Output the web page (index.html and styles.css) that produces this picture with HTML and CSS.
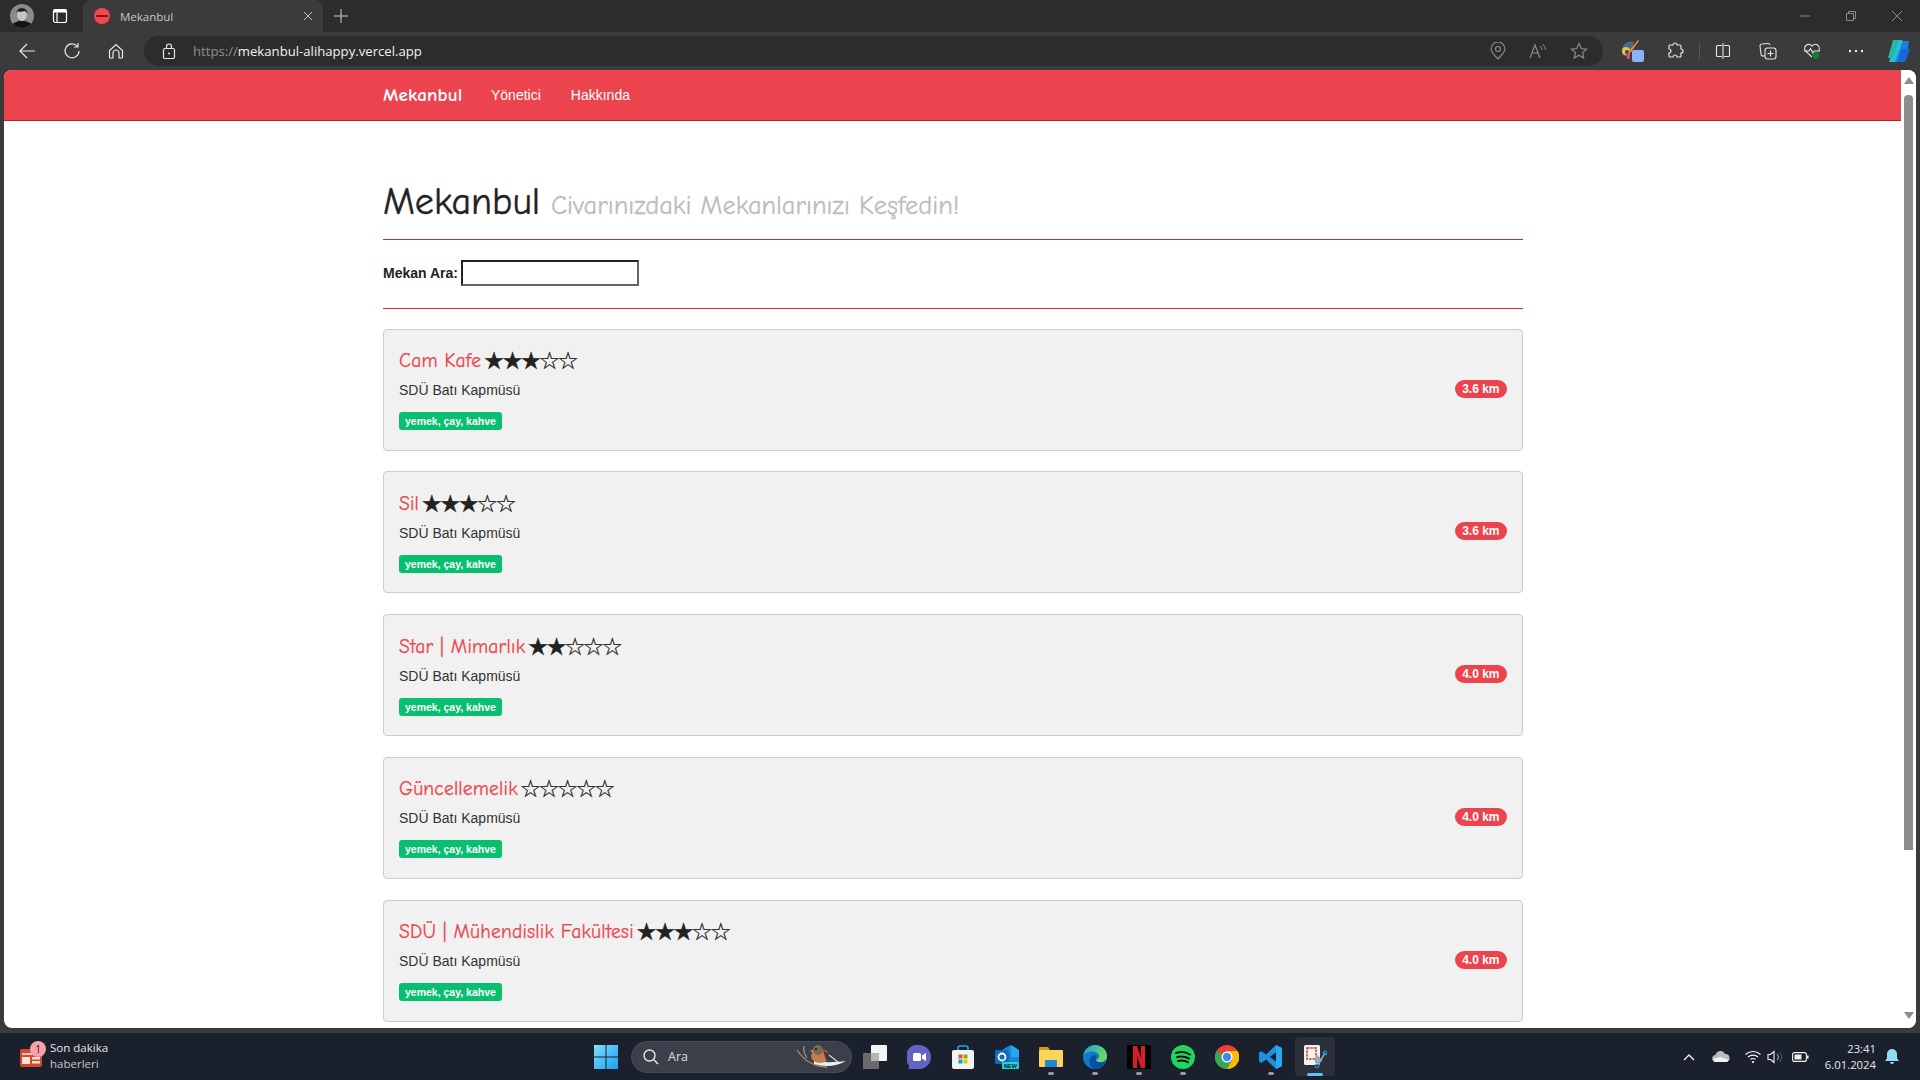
FILE: index.html
```html
<!DOCTYPE html>
<html lang="tr">
<head>
<meta charset="utf-8">
<title>Mekanbul</title>
<link rel="stylesheet" href="styles.css">
</head>
<body>
<div class="tabbar">
  <div class="avatar"><svg viewBox="0 0 24 24" width="24" height="24"><rect width="24" height="24" fill="#8a8a8a"/><ellipse cx="12" cy="11" rx="5" ry="6" fill="#c4c4c4"/><path d="M6.500 10c-1-7 11-8 11 0-1-2-2-3-3-3-3 1-6 1-7 0-1 1-1 2-1 3z" fill="#1c1c1c"/><path d="M8 15c1 3 7 3 8 0l-1 4H9z" fill="#3a3a3a"/><path d="M1 24c1-5 5-7 11-7s10 2 11 7z" fill="#141414"/></svg></div>
  <svg class="tabs-ico" viewBox="0 0 16 16" width="16" height="16"><rect x="1.500" y="1.500" width="13" height="13" rx="2" fill="none" stroke="#fff" stroke-width="1.200"/><path d="M5 4.500v10" stroke="#fff" stroke-width="1.200"/><rect x="1.500" y="1.500" width="13" height="3" fill="#fff"/></svg>
  <div class="tab">
    <span class="favicon"><span class="favicon-mark"></span></span>
    <span class="tab-title">Mekanbul</span>
    <svg class="tab-x" viewBox="0 0 10 10" width="10" height="10"><path d="M1 1l8 8M9 1l-8 8" stroke="#c8c8c8" stroke-width="1"/></svg>
  </div>
  <svg class="plus" viewBox="0 0 14 14" width="14" height="14"><path d="M7 0v14M0 7h14" stroke="#d0d0d0" stroke-width="1"/></svg>
  <div class="win-controls">
    <svg viewBox="0 0 10 10" width="10" height="10"><path d="M0 5h10" stroke="#8a8a8a"/></svg>
    <svg viewBox="0 0 10 10" width="10" height="10"><path d="M.5 2.500h7v7h-7zM2.500 2.500v-2h7v7h-2" fill="none" stroke="#8a8a8a"/></svg>
    <svg viewBox="0 0 10 10" width="10" height="10"><path d="M0 0l10 10M10 0L0 10" stroke="#8a8a8a"/></svg>
  </div>
</div>
<div class="toolbar">
  <svg class="tb-ico back" viewBox="0 0 18 18" width="18" height="18"><path d="M17 9H2M9 2L2 9l7 7" fill="none" stroke="#e6e6e6" stroke-width="1.200"/></svg>
  <svg class="tb-ico" viewBox="0 0 18 18" width="18" height="18"><path d="M14.500 4.500A7 7 0 1 0 16 9M15 1v4h-4" fill="none" stroke="#e6e6e6" stroke-width="1.200"/></svg>
  <svg class="tb-ico home" viewBox="0 0 18 18" width="18" height="18"><path d="M2.500 8.500L9 2.500l6.500 6v6.500a1 1 0 0 1-1 1H12v-5a3 3 0 0 0-6 0v5H3.500a1 1 0 0 1-1-1z" fill="none" stroke="#e6e6e6" stroke-width="1.200"/></svg>
  <div class="address">
    <svg class="lock" viewBox="0 0 14 16" width="14" height="16"><rect x="1.500" y="5.500" width="11" height="10" rx="1.500" fill="none" stroke="#e6e6e6" stroke-width="1.200"/><path d="M4.500 5.500V3.500a2.500 2.500 0 0 1 5 0v2" fill="none" stroke="#e6e6e6" stroke-width="1.200"/><circle cx="7" cy="10.500" r="1" fill="#e6e6e6"/></svg>
    <span class="url"><span class="url-dim">https://</span>mekanbul-alihappy.vercel.app</span>
    <div class="addr-tools">
      <svg viewBox="0 0 16 18" width="16" height="18"><path d="M8 17C4 13 1 10 1 7a7 7 0 0 1 14 0c0 3-3 6-7 10z" fill="none" stroke="#8c8c8c" stroke-width="1.200"/><circle cx="8" cy="7" r="2.500" fill="none" stroke="#8c8c8c" stroke-width="1.200"/></svg>
      <svg viewBox="0 0 18 16" width="18" height="16"><path d="M1 15L6 2l5 13M3 10h6" fill="none" stroke="#8c8c8c" stroke-width="1.200"/><path d="M11 3a5 5 0 0 1 2 4M13.500 1a8 8 0 0 1 3 6" fill="none" stroke="#8c8c8c"/></svg>
      <svg viewBox="0 0 18 18" width="18" height="18"><path d="M9 1.500l2.300 5 5.200.6-3.900 3.500 1.100 5.400L9 13.300 4.300 16l1.100-5.400L1.500 7.100l5.200-.6z" fill="none" stroke="#8c8c8c" stroke-width="1.200"/></svg>
    </div>
  </div>
  <div class="tb-right">
    <svg class="ext" viewBox="0 0 24 24" width="24" height="24"><path d="M1 11a9 9 0 0 1 12-8l-2 9-4 5H3a6 6 0 0 1-2-6z" fill="#3f6f8f"/><circle cx="5" cy="12" r="4" fill="#f2c230"/><circle cx="6" cy="13" r="2" fill="#30465a"/><path d="M8 12l9-11 1 1-8 11z" fill="#f08a2c"/><path d="M5 15h4v5H6z" fill="#e0457a"/><rect x="11" y="11" width="12" height="12" rx="2" fill="#8ab4f8"/></svg>
    <svg class="puzzle" viewBox="0 0 18 18" width="18" height="18"><path d="M7 3a2 2 0 0 1 4 0h3a1 1 0 0 1 1 1v3a2 2 0 0 1 0 4v3a1 1 0 0 1-1 1h-3a2 2 0 0 0-4 0H4a1 1 0 0 1-1-1v-3a2 2 0 0 0 0-4V4a1 1 0 0 1 1-1z" fill="none" stroke="#e6e6e6" stroke-width="1.200"/></svg>
    <span class="sep"></span>
    <svg class="split" viewBox="0 0 16 16" width="16" height="16"><path d="M7 2.500H2.500a1 1 0 0 0-1 1v9a1 1 0 0 0 1 1H7M9 2.500h4.500a1 1 0 0 1 1 1v9a1 1 0 0 1-1 1H9M8 0v16" fill="none" stroke="#e6e6e6" stroke-width="1.100"/></svg>
    <svg class="collect" viewBox="0 0 18 18" width="18" height="18"><path d="M6 14H4a2 2 0 0 1-2-2L1 4a2 2 0 0 1 2-2l6-.5a2 2 0 0 1 2 1.500" fill="none" stroke="#e6e6e6" stroke-width="1.100"/><rect x="6" y="6" width="11" height="11" rx="2.500" fill="none" stroke="#e6e6e6" stroke-width="1.100"/><path d="M11.500 8.500v6M8.500 11.500h6" stroke="#e6e6e6" stroke-width="1.100"/></svg>
    <svg class="health" viewBox="0 0 18 18" width="18" height="18"><path d="M9 15L2.500 9a4 4 0 0 1 6.500-5 4 4 0 0 1 6.500 5" fill="none" stroke="#e6e6e6" stroke-width="1.100"/><path d="M1 9h5l1.500-2.500L10 11l1-2h6" fill="none" stroke="#e6e6e6" stroke-width="1.100"/><circle cx="13" cy="13.500" r="3.500" fill="#1d7a2f"/></svg>
    <svg class="dots" viewBox="0 0 16 4" width="16" height="4"><circle cx="2" cy="2" r="1.200" fill="#e6e6e6"/><circle cx="8" cy="2" r="1.200" fill="#e6e6e6"/><circle cx="14" cy="2" r="1.200" fill="#e6e6e6"/></svg>
    <svg class="copilot" viewBox="0 0 24 24" width="24" height="24"><path d="M7 1h8a3 3 0 0 1 2 1L12 20a3 3 0 0 1-3 3H3l1-3z" fill="#27c0d0"/><path d="M7 1h6L7 19H2z" fill="#2bb7a8"/><path d="M17 2l6 0-3 18a3 3 0 0 1-3 3H9z" fill="#1f7fe8"/><path d="M15 10h9l-4 11a3 3 0 0 1-3 2h-5z" fill="#1668d8"/></svg>
  </div>
</div>
<div class="viewport">
  <div class="page">
    <main class="page-scroll">
      <nav class="navbar">
        <div class="container nav-row">
          <a class="brand">Mekanbul</a>
          <a class="nav-link">Yönetici</a>
          <a class="nav-link">Hakkında</a>
        </div>
      </nav>
      <div class="container">
        <header class="page-header">
          <h1>Mekanbul <small>Civarınızdaki Mekanlarınızı Keşfedin!</small></h1>
        </header>
        <div class="search">
          <label class="search-label">Mekan Ara:</label>
          <span class="search-input"></span>
        </div>
        <div class="list">
          <article class="card">
            <div class="card-body">
              <h4 class="card-title"><span class="card-name">Cam Kafe</span> <span class="stars">★★★☆☆</span></h4>
              <p class="addr">SDÜ Batı Kapmüsü</p>
              <span class="tag">yemek, çay, kahve</span>
            </div>
            <span class="dist">3.6 km</span>
          </article>
          <article class="card">
            <div class="card-body">
              <h4 class="card-title"><span class="card-name">Sil</span> <span class="stars">★★★☆☆</span></h4>
              <p class="addr">SDÜ Batı Kapmüsü</p>
              <span class="tag">yemek, çay, kahve</span>
            </div>
            <span class="dist">3.6 km</span>
          </article>
          <article class="card">
            <div class="card-body">
              <h4 class="card-title"><span class="card-name">Star | Mimarlık</span> <span class="stars">★★☆☆☆</span></h4>
              <p class="addr">SDÜ Batı Kapmüsü</p>
              <span class="tag">yemek, çay, kahve</span>
            </div>
            <span class="dist">4.0 km</span>
          </article>
          <article class="card">
            <div class="card-body">
              <h4 class="card-title"><span class="card-name">Güncellemelik</span> <span class="stars">☆☆☆☆☆</span></h4>
              <p class="addr">SDÜ Batı Kapmüsü</p>
              <span class="tag">yemek, çay, kahve</span>
            </div>
            <span class="dist">4.0 km</span>
          </article>
          <article class="card">
            <div class="card-body">
              <h4 class="card-title"><span class="card-name">SDÜ | Mühendislik Fakültesi</span> <span class="stars">★★★☆☆</span></h4>
              <p class="addr">SDÜ Batı Kapmüsü</p>
              <span class="tag">yemek, çay, kahve</span>
            </div>
            <span class="dist">4.0 km</span>
          </article>
        </div>
      </div>
    </main>
    <aside class="scrollbar">
      <span class="arrow-up"></span>
      <span class="thumb"></span>
      <span class="arrow-down"></span>
    </aside>
  </div>
</div>
<footer class="taskbar">
  <div class="news">
    <span class="news-ico">
      <svg viewBox="0 0 22 20" width="22" height="20"><rect y="2" width="22" height="18" rx="2" fill="#d9482b"/><rect x="2" y="6" width="18" height="2" fill="#f7c7b8"/><rect x="2" y="10" width="8" height="7" fill="#fbe3da"/><rect x="12" y="10" width="8" height="2.500" fill="#fbe3da"/><rect x="12" y="14" width="8" height="2.500" fill="#fbe3da"/></svg>
      <span class="news-badge">1</span>
    </span>
    <div class="news-text"><div>Son dakika</div><div class="news-sub">haberleri</div></div>
  </div>
  <div class="task-center">
    <svg class="win" viewBox="0 0 24 24" width="24" height="24"><defs><linearGradient id="w" x1="0" y1="0" x2="1" y2="1"><stop offset="0" stop-color="#7fe0fb"/><stop offset="1" stop-color="#1a9ff0"/></linearGradient></defs><path d="M0 0h11.500v11.500H0zM12.500 0H24v11.500H12.500zM0 12.500h11.500V24H0zM12.500 12.500H24V24H12.500z" fill="url(#w)"/></svg>
    <div class="task-search">
      <svg viewBox="0 0 16 16" width="16" height="16"><circle cx="6.500" cy="6.500" r="5.500" fill="none" stroke="#e8e8e8" stroke-width="1.400"/><path d="M10.500 10.500L15 15" stroke="#e8e8e8" stroke-width="1.400"/></svg>
      <span class="search-text">Ara</span>
      <svg class="bird" viewBox="0 0 52 25" width="52" height="25"><path d="M8 2c-1 5 1 9 3 12M1 6c8 12 18 17 30 17" fill="none" stroke="#a8906c" stroke-width="1.300"/><path d="M18 20c10 3 22 3 32-3-9 1-20 2-32 0z" fill="#e8f0f6"/><ellipse cx="24" cy="12" rx="9" ry="7" fill="#c47c50"/><circle cx="22" cy="6" r="5" fill="#77685a"/><circle cx="20" cy="5" r="1" fill="#111"/><path d="M17 6l-3 1 3 1z" fill="#cfc2a8"/><path d="M27 6l13 9-10 1z" fill="#3e3a38"/><path d="M33 11l9 7" stroke="#d8d8d8" stroke-width="1.200"/></svg>
    </div>
    <div class="task-icons">
      <span class="task-item"><svg viewBox="0 0 24 24" width="24" height="24"><rect x="0" y="8" width="16" height="16" rx="1" fill="#6a6a6a"/><rect x="8" y="0" width="16" height="16" rx="1" fill="#f4f4f4"/><rect x="8" y="8" width="8" height="8" fill="#b5b5b5"/></svg></span>
      <span class="task-item"><svg viewBox="0 0 24 24" width="24" height="24"><path d="M12 0a12 12 0 0 1 0 24H1c2-1 1-3 0-5a12 12 0 0 1 11-19z" fill="#6264c4"/><rect x="6" y="8" width="8" height="8" rx="1.500" fill="#fff"/><path d="M15 10.500l4-2.500v8l-4-2.500z" fill="#fff"/></svg></span>
      <span class="task-item"><svg viewBox="0 0 24 24" width="24" height="24"><path d="M7 6V3a2 2 0 0 1 2-2h6a2 2 0 0 1 2 2v3" fill="none" stroke="#1fa6e8" stroke-width="1.600"/><rect x="1" y="5" width="22" height="19" rx="2" fill="#f2f2f2"/><rect x="7.500" y="9.500" width="4" height="4" fill="#f25022"/><rect x="12.500" y="9.500" width="4" height="4" fill="#7fba00"/><rect x="7.500" y="14.500" width="4" height="4" fill="#00a4ef"/><rect x="12.500" y="14.500" width="4" height="4" fill="#ffb900"/></svg></span>
      <span class="task-item"><svg viewBox="0 0 24 24" width="24" height="24"><path d="M8 4l8-4 8 5v13H8z" fill="#1a86d9"/><path d="M16 0l8 5v7h-8z" fill="#28a8ea"/><rect y="5" width="14" height="14" rx="1.500" fill="#0f6cbd"/><circle cx="7" cy="12" r="3.500" fill="none" stroke="#fff" stroke-width="1.800"/><rect x="7" y="17" width="17" height="7" rx="1" fill="#22d3d3"/><text class="new-label" x="15.500" y="22.700" text-anchor="middle">NEW</text></svg></span>
      <span class="task-item running"><svg viewBox="0 0 24 24" width="24" height="24"><path d="M0 3a1 1 0 0 1 1-1h8l2 3H0z" fill="#d19a1f"/><rect y="5" width="24" height="17" rx="1" fill="#fcd55b"/><rect x="6" y="15" width="12" height="7" rx="1" fill="#1e88d8"/></svg></span>
      <span class="task-item running"><svg viewBox="0 0 24 24" width="24" height="24"><defs><linearGradient id="e" x1="0" y1="0" x2="1" y2="0.600"><stop offset="0" stop-color="#1a9fd8"/><stop offset="1" stop-color="#6fdc5e"/></linearGradient></defs><circle cx="12" cy="12" r="12" fill="#0f78c9"/><path d="M13 15c3 4 7 3 10 0-1 5-6 9-11 9-5-1-7-8-4-12 2-2 4-2 6-1-2 1-2 3-1 4z" fill="#0a4f9e"/><path d="M.3 10C2 4 7 0 12 0c7 0 12 5 12 11 0 4-3 6-7 6-2 0-4-1-4-2 2-1 3-2 3-4 0-3-4-5-8-4.500C4 7 1.500 8.500.3 10z" fill="url(#e)"/></svg></span>
      <span class="task-item running"><svg viewBox="0 0 24 24" width="24" height="24"><rect width="24" height="24" fill="#000"/><path d="M6 1h4l4 12V1h4v22h-4L10 11v12H6z" fill="#d81f26"/></svg></span>
      <span class="task-item running"><svg viewBox="0 0 24 24" width="24" height="24"><circle cx="12" cy="12" r="12" fill="#1ed760"/><path d="M5 8c5-1.500 10-1 14 1.500M6 12c4-1 8-.6 12 1.500M7 16c3-.8 7-.4 10 1.200" fill="none" stroke="#111" stroke-width="2" stroke-linecap="round"/></svg></span>
      <span class="task-item"><svg viewBox="0 0 24 24" width="24" height="24"><circle cx="12" cy="12" r="12" fill="#ea4335"/><path d="M12 12L1.600 6A12 12 0 0 0 12 24l5-8z" fill="#34a853"/><path d="M12 6h10.600A12 12 0 0 1 12 24l5.200-9z" fill="#fbbc05"/><circle cx="12" cy="12" r="5.500" fill="#fff"/><circle cx="12" cy="12" r="4.200" fill="#4285f4"/></svg></span>
      <span class="task-item running"><svg viewBox="0 0 24 24" width="24" height="24"><path d="M17 0l6 3v18l-6 3-10-9.500-4.500 3.500L0 16.500V7.500L2.500 6 7 9.500z" fill="#1f8fe0"/><path d="M18 6.500L11 12l7 5.500z" fill="#1a1f2c"/><path d="M17 0l6 3v18l-6 3z" fill="#2aa8f0"/></svg></span>
      <span class="task-item active"><svg viewBox="0 0 24 24" width="24" height="24"><rect x="1" y="0" width="16" height="20" rx="1.500" fill="#f1f1f1"/><path d="M4 3h9v11H4z" fill="none" stroke="#d9342b" stroke-width="1.500" stroke-dasharray="2.500 1"/><path d="M12 12h5v6h-5z" fill="#9aa7b5"/><path d="M22 8l-7 12M13 10l6 6" stroke="#9aa7b5" stroke-width="1.500"/><circle cx="22" cy="8" r="1.800" fill="none" stroke="#1f8fe0" stroke-width="1.300"/><circle cx="14" cy="21" r="1.800" fill="none" stroke="#1f8fe0" stroke-width="1.300"/></svg></span>
    </div>
  </div>
  <div class="tray">
    <svg viewBox="0 0 12 8" width="12" height="8"><path d="M1 7l5-5 5 5" fill="none" stroke="#f0f0f0" stroke-width="1.400"/></svg>
    <svg class="cloud" viewBox="0 0 18 11" width="18" height="11"><path d="M4 11a3.500 3.500 0 0 1-.5-7A5 5 0 0 1 13 3a4 4 0 0 1 1 8z" fill="#bdbdbd"/><path d="M1 8l7-2 9 3-2 2H3z" fill="#f2f2f2"/></svg>
    <svg class="wifi" viewBox="0 0 16 13" width="16" height="13"><path d="M.5 4.500a11 11 0 0 1 15 0M3 7a7.500 7.500 0 0 1 10 0M5.500 9.500a3.500 3.500 0 0 1 5 0" fill="none" stroke="#f0f0f0" stroke-width="1.100"/><circle cx="8" cy="12" r="1.100" fill="#f0f0f0"/></svg>
    <svg class="vol" viewBox="0 0 16 14" width="16" height="14"><path d="M1 4.500h2.500L7 1.500v11l-3.500-3H1z" fill="none" stroke="#f0f0f0" stroke-width="1.100"/><path d="M10 4a4 4 0 0 1 0 6" fill="none" stroke="#bbb"/><path d="M12.500 2a7 7 0 0 1 0 10" fill="none" stroke="#555"/></svg>
    <svg class="bat" viewBox="0 0 17 10" width="17" height="10"><rect x=".6" y=".6" width="13.800" height="8.800" rx="2" fill="none" stroke="#f0f0f0" stroke-width="1.100"/><rect x="2.500" y="2.500" width="7" height="5" fill="#f0f0f0"/><rect x="15" y="3.500" width="1.600" height="3" fill="#f0f0f0"/></svg>
    <div class="clock"><div>23:41</div><div>6.01.2024</div></div>
    <svg class="bell" viewBox="0 0 14 16" width="14" height="16"><path d="M7 0a5 5 0 0 1 5 5v4l2 3H0l2-3V5a5 5 0 0 1 5-5z" fill="#8fdcf5"/><path d="M5 13h4a2 2 0 0 1-4 0z" fill="#8fdcf5"/></svg>
  </div>
</footer>
</body>
</html>
```
FILE: styles.css
```css
* { box-sizing: border-box; }
html, body { margin: 0; height: 100%; overflow: hidden; }
body { width: 1920px; height: 1080px; display: flex; flex-direction: column; background: #3a3a3a; font-family: "Liberation Sans", Arial, sans-serif; color: #222; }
svg { display: block; flex: none; }

.tabbar { height: 32px; flex: none; display: flex; align-items: center; background: #2c2c2c; position: relative; }
.avatar { width: 24px; height: 24px; margin-left: 10px; border-radius: 50%; overflow: hidden; }
.tabs-ico { margin-left: 18px; }
.tab { width: 240px; height: 32px; margin-left: 15px; align-self: flex-end; padding: 0 10px 0 11px; background: #3b3b3b; border-radius: 8px 8px 0 0; display: flex; align-items: center; font: 11.500px "Open Sans", sans-serif; color: #c8c8c8; }
.favicon { width: 16px; height: 16px; border-radius: 50%; background: #f0484f; display: flex; align-items: center; justify-content: center; }
.favicon-mark { width: 12px; height: 2px; background: #7a1a20; }
.tab-title { margin-left: 10px; flex: 1; }
.plus { margin-left: 11px; }
.win-controls { margin-left: auto; display: flex; align-items: center; gap: 36px; padding-right: 18px; }

.toolbar { height: 38px; flex: none; display: flex; align-items: center; background: #3b3b3b; padding-left: 18px; }
.tb-ico { margin-right: 26px; }
.back { margin-right: 27px; }
.home { margin-right: 19px; }
.address { width: 1459px; height: 30px; background: #2c2c2c; border-radius: 15px; display: flex; align-items: center; padding-left: 18px; }
.lock { margin-right: 17px; }
.url { font: 13.150px "Open Sans", sans-serif; color: #f2f2f2; white-space: nowrap; }
.url-dim { color: #8f8f8f; }
.addr-tools { margin-left: auto; display: flex; align-items: center; gap: 23px; padding-right: 15px; }
.tb-right { display: flex; align-items: center; margin-left: 18px; }
.puzzle { margin-left: 21px; }
.sep { width: 1px; height: 16px; background: #5a5a5a; margin-left: 15px; }
.split { margin-left: 15px; }
.collect { margin-left: 28px; }
.health { margin-left: 26px; }
.dots { margin-left: 27px; }
.copilot { margin-left: 22px; }

.viewport { height: 958px; flex: none; padding: 0 4px; }
.page { height: 958px; background: #fff; border-radius: 8px; overflow: hidden; display: flex; }
.page-scroll { flex: 1; min-width: 0; overflow: hidden; }
.scrollbar { width: 15px; flex: none; background: #fff; display: flex; flex-direction: column; align-items: center; padding-top: 7px; }
.arrow-up { width: 0; height: 0; border: 5px solid transparent; border-top: 0; border-bottom: 7px solid #8c8c8c; }
.thumb { width: 9px; height: 755px; margin-top: 11px; background: #8c8c8c; border-radius: 4px 4px 0 0; }
.arrow-down { width: 0; height: 0; margin-top: 162px; border: 5px solid transparent; border-bottom: 0; border-top: 7px solid #8c8c8c; }

.navbar { height: 51px; background: #ec444e; border-bottom: 1px solid #b8202c; }
.container { width: 1140px; margin-left: 379px; }
.nav-row { display: flex; align-items: center; height: 50px; }
.brand { width: 78px; margin-right: 30px; font: bold 19px "Comic Sans MS", "Comic Neue", cursive; letter-spacing: .2px; color: #fff; white-space: nowrap; }
.nav-link { font-size: 14px; color: #fff; margin-right: 30px; }

.page-header { height: 71px; margin-top: 48px; padding-top: 13px; border-bottom: 1px solid #c03028; }
.page-header h1 { margin: 0; font: 400 38px/1.1 "Comic Sans MS", "Comic Neue", cursive; -webkit-text-stroke: .4px #222; color: #222; white-space: nowrap; }
.page-header small { margin-left: -2px; font-size: 26.400px; color: #bdbdbd; -webkit-text-stroke: .3px #bdbdbd; }

.search { height: 69px; border-bottom: 1px solid #cc3028; display: flex; align-items: center; padding-bottom: 2px; }
.search-label { font-size: 14px; font-weight: bold; margin-right: 3px; }
.search-input { width: 178px; height: 26px; border: 2px solid; border-color: #222 #666 #666 #222; background: #fff; }

.list { margin-top: 19.600px; display: flex; flex-direction: column; gap: 20.750px; }
.card { height: 122px; flex: none; background: #f1f1f1; border: 1px solid #ccc; border-radius: 4px; padding: 0 15px; display: flex; align-items: center; justify-content: space-between; }
.card-body { padding-top: 2px; }
.card-title { margin: 0; display: flex; align-items: center; gap: 2px; font: 400 19.500px/20px "Comic Sans MS", "Comic Neue", cursive; letter-spacing: .2px; }
.card-name { color: #ec444e; -webkit-text-stroke: .25px #ec444e; }
.stars { font-family: "DejaVu Sans", sans-serif; font-size: 24px; line-height: 20px; color: #222; letter-spacing: -3px; -webkit-text-stroke: .3px #222; }
.addr { margin: 9px 0 11px; font-size: 14px; line-height: 20px; color: #333; }
.tag { display: inline-block; height: 18px; padding: 0 6px; background: #07bf6f; border-radius: 3px; font-size: 10.500px; font-weight: bold; line-height: 18px; color: #fff; }
.dist { height: 18px; margin-bottom: 2px; padding: 0 7.500px; background: #ec444e; border-radius: 10px; font-size: 12px; font-weight: bold; line-height: 18px; color: #fff; }

.taskbar { flex: 1; margin-top: 5px; background: #1a202c; position: relative; display: flex; align-items: center; color: #e8e8e8; font: 11.500px "Open Sans", sans-serif; }
.news { display: flex; align-items: center; margin-left: 20px; width: 574px; }
.news-ico { position: relative; width: 22px; height: 20px; }
.news-badge { position: absolute; top: -6px; left: 10px; width: 16px; height: 16px; border-radius: 50%; background: #f9a0ad; color: #222; font-size: 10px; line-height: 16px; text-align: center; }
.news-text { margin: -2px 0 0 8px; line-height: 16px; }
.news-sub { color: #c8c8c8; }
.task-center { display: flex; align-items: center; }
.win { margin-right: 13px; }
.task-search { width: 221px; height: 32px; border-radius: 16px; background: #3a3f4a; border: 1px solid #474c58; display: flex; align-items: center; padding-left: 11px; color: #ddd; font-size: 12.500px; }
.search-text { margin-left: 9px; }
.bird { margin-left: auto; margin-right: 3px; }
.task-icons { display: flex; align-items: center; margin-left: .5px; }
.task-item { position: relative; width: 44px; height: 39px; display: flex; align-items: center; justify-content: center; }
.task-item.running::after { content: ""; position: absolute; bottom: 1px; left: 19px; width: 6px; height: 3px; border-radius: 2px; background: #9a9a9a; }
.task-item.active { width: 40px; margin: 0 2px; background: #2b303b; border-radius: 4px; }
.task-item.active::after { content: ""; position: absolute; bottom: 0; left: 12px; width: 16px; height: 3px; border-radius: 2px; background: #5cc4f5; }
.new-label { font: bold 5.500px "Liberation Sans", sans-serif; fill: #123; }
.tray { margin-left: auto; display: flex; align-items: center; padding-right: 21px; }
.cloud { margin-left: 17px; }
.wifi { margin-left: 15px; }
.vol { margin-left: 6px; }
.bat { margin-left: 9px; }
.clock { margin-left: 16px; text-align: right; line-height: 16px; font-size: 11.300px; }
.bell { margin-left: 9px; }
```
